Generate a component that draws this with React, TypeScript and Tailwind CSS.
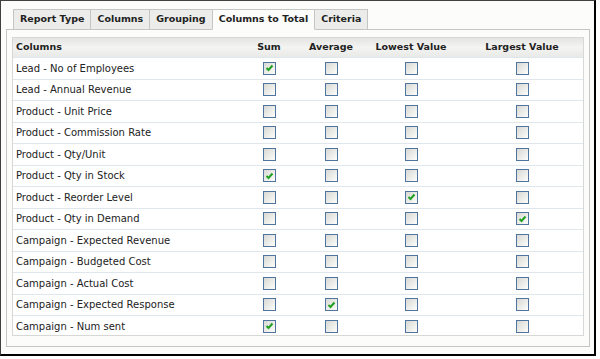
import React from "react"

const tabs = ["Report Type", "Columns", "Grouping", "Columns to Total", "Criteria"]
const active = "Columns to Total"

type Row = { label: string; checks: [boolean, boolean, boolean, boolean] }

const rows: Row[] = [
  { label: "Lead - No of Employees", checks: [true, false, false, false] },
  { label: "Lead - Annual Revenue", checks: [false, false, false, false] },
  { label: "Product - Unit Price", checks: [false, false, false, false] },
  { label: "Product - Commission Rate", checks: [false, false, false, false] },
  { label: "Product - Qty/Unit", checks: [false, false, false, false] },
  { label: "Product - Qty in Stock", checks: [true, false, false, false] },
  { label: "Product - Reorder Level", checks: [false, false, true, false] },
  { label: "Product - Qty in Demand", checks: [false, false, false, true] },
  { label: "Campaign - Expected Revenue", checks: [false, false, false, false] },
  { label: "Campaign - Budgeted Cost", checks: [false, false, false, false] },
  { label: "Campaign - Actual Cost", checks: [false, false, false, false] },
  { label: "Campaign - Expected Response", checks: [false, true, false, false] },
  { label: "Campaign - Num sent", checks: [true, false, false, false] },
]

function Check({ on }: { on: boolean }) {
  return (
    <div className="w-[13px] h-[13px] border border-[#4f74a0] bg-gradient-to-br from-[#d8d8d4] to-[#fdfdfb] flex items-center justify-center">
      {on && (
        <svg width="9" height="8" viewBox="0 0 9 8">
          <path d="M1.5 4 L3.5 6 L7.5 1.5" fill="none" stroke="#21a121" strokeWidth="2" />
        </svg>
      )}
    </div>
  )
}

const cols = "grid grid-cols-[220px_72px_52px_108px_114px]"

export default function App() {
  return (
    <div className="w-[600px] h-[359px] bg-white font-['DejaVu_Sans',sans-serif]">
      <div className="w-[596px] h-[356px] border-t border-l border-[#404040] border-r-2 border-b-2 border-r-black border-b-black bg-[#fcfcfa] pt-[8px] pl-[5px]">
        <div className="flex pl-[7px] h-[21px]">
          {tabs.map((t) => (
            <div
              key={t}
              className={
                "px-[6px] -ml-px first:ml-0 border border-[#c4c6c4] text-[9.5px] font-bold text-[#222] flex items-center h-[21px] " +
                (t === active ? "bg-[#fcfcfa] border-b-[#fcfcfa] relative z-10" : "bg-[#ececea]")
              }
            >
              {t}
            </div>
          ))}
        </div>
        <div className="-mt-px w-[584px] h-[318px] border border-[#c4c6c4] pt-[7px] pl-[5px]">
          <div className="w-[572px] h-[299px] border border-[#d6d8d6] bg-white">
            <div className={cols + " h-[19px] items-center bg-gradient-to-b from-[#e4e6e4] via-[#f4f4f2] to-[#e8eae8] text-[9.5px] font-bold text-[#222]"}>
              <div className="pl-[3px]">Columns</div>
              <div className="text-center">Sum</div>
              <div className="text-center">Average</div>
              <div className="text-center">Lowest Value</div>
              <div className="text-center">Largest Value</div>
            </div>
            {rows.map((r) => (
              <div
                key={r.label}
                className={cols + " h-[21.5px] items-center border-t border-[#dfe7ec] text-[10px] text-[#222]"}
              >
                <div className="pl-[3px]">{r.label}</div>
                {r.checks.map((c, i) => (
                  <div key={i} className="flex justify-center">
                    <Check on={c} />
                  </div>
                ))}
              </div>
            ))}
          </div>
        </div>
      </div>
    </div>
  )
}
